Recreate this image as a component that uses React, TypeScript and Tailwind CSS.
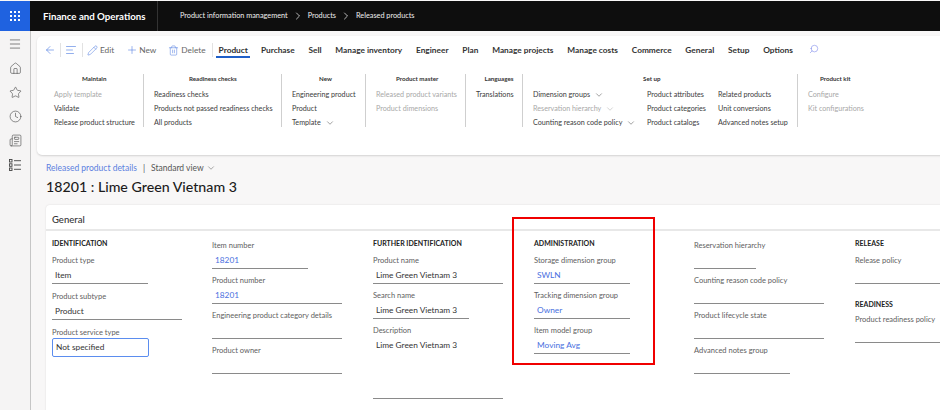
import { ChevronDown, ChevronRight, ArrowLeft, Plus, Pencil, Trash2, Search, Home, Star, Clock, Newspaper, Menu, AlignLeft } from 'lucide-react';

const tabs = ['Purchase', 'Sell', 'Manage inventory', 'Engineer', 'Plan', 'Manage projects', 'Manage costs', 'Commerce', 'General', 'Setup', 'Options'];

function AppGrid() {
  return (
    <svg width="10" height="10" viewBox="0 0 10 10" fill="currentColor">
      {[0, 4, 8].map((y) =>
        [0, 4, 8].map((x) => <rect key={`${x}-${y}`} x={x} y={y} width="2" height="2" />),
      )}
    </svg>
  );
}

function CheckList() {
  return (
    <svg width="14" height="14" viewBox="0 0 14 14" fill="none" stroke="currentColor" strokeWidth="0.9">
      <rect x="1.5" y="1.5" width="2.5" height="2.5" />
      <rect x="1.5" y="5.8" width="2.5" height="2.5" />
      <rect x="1.5" y="10" width="2.5" height="2.5" />
      <path d="M6 2.7h7M6 7h7M6 11.3h7" />
    </svg>
  );
}

function RibbonItem({ text, off, chevron }: { text: string; off?: boolean; chevron?: boolean }) {
  return (
    <div className={`h-[14px] flex items-center whitespace-nowrap ${off ? 'text-[#a8a8a8]' : 'text-[#3c3c3c]'}`}>
      {text}
      {chevron && <ChevronDown className={`ml-[4px] ${off ? 'text-[#a8a8a8]' : 'text-[#444]'}`} size={10} strokeWidth={1.2} />}
    </div>
  );
}

function RibbonGroup({ title, width, pl, border = true, titleClass = 'text-center', children }: { title: string; width: string; pl: string; border?: boolean; titleClass?: string; children: React.ReactNode }) {
  return (
    <div className={`${width} ${pl} h-[53px] shrink-0 ${border ? 'border-r border-[#cfcfcf]' : ''}`}>
      <div className={`text-[6.2px] leading-[9px] font-bold text-[#333] mb-[5px] ${titleClass}`}>{title}</div>
      {children}
    </div>
  );
}

function Field({ label, value, link, line, mb = 'mb-[4px]', boxed }: { label: string; value?: string; link?: boolean; line: string; mb?: string; boxed?: boolean }) {
  return (
    <div className={mb}>
      <div className="h-[14px] leading-[15px] text-[7.5px] text-[#5e5e5e] whitespace-nowrap">{label}</div>
      {boxed ? (
        <div className={`${line} h-[19px] mt-[-1px] border border-[#5b8def] rounded-[2px] pl-[3px] leading-[17px] text-[8.3px] text-[#333]`}>{value}</div>
      ) : (
        <div className={`${line} h-[17px] border-b border-[#8a8a8a] pl-[3px] leading-[16px] text-[8.3px] whitespace-nowrap ${link ? 'text-[#4a6fe0]' : 'text-[#333]'}`}>{value}</div>
      )}
    </div>
  );
}

function Heading({ text, mb = 'mb-[5px]' }: { text: string; mb?: string }) {
  return <div className={`h-[10px] leading-[10px] text-[7px] font-bold text-[#222] ${mb}`}>{text}</div>;
}

export default function App() {
  return (
    <div className="w-[940px] h-[410px] overflow-hidden relative bg-[#f8f7f7] font-['Lato',sans-serif] pt-px">
      <div className="flex h-[30px] bg-[#0e0e0e] text-white items-center">
        <div className="w-[30px] h-full bg-[#1f62e0] flex items-center justify-center">
          <AppGrid />
        </div>
        <div className="w-[128px] h-full pl-[13px] text-[9.7px] font-bold leading-[30px] border-r border-[#333] whitespace-nowrap">Finance and Operations</div>
        <div className="flex items-center pl-[22px] text-[7.3px] text-[#eee] whitespace-nowrap">
          Product information management
          <ChevronRight size={12} strokeWidth={1.5} className="mx-[4px]" />
          Products
          <ChevronRight size={12} strokeWidth={1.5} className="mx-[4px]" />
          Released products
        </div>
      </div>

      <div className="flex h-[379px]">
        <div className="w-[31px] shrink-0 bg-[#f5f4f4] border-r border-[#c6c6c6] flex flex-col items-center pt-[6px] gap-[11px] text-[#444]">
          <Menu size={14} strokeWidth={1.1} />
          <Home size={13} strokeWidth={1.1} />
          <Star size={13} strokeWidth={1.1} />
          <Clock size={13} strokeWidth={1.1} />
          <Newspaper size={13} strokeWidth={1.1} />
          <CheckList />
        </div>

        <div className="flex-1 min-w-0 pt-[5px]">
          <div className="ml-[6px] w-[960px] h-[119px] bg-white rounded-[5px] shadow-[0_1px_2px_rgba(0,0,0,0.15)]">
            <div className="flex items-center h-[24px] pl-[7px] pt-[4px] text-[8.3px] text-[#3a3a3a] whitespace-nowrap">
              <ArrowLeft size={12} strokeWidth={1.2} className="text-[#4a78e0]" />
              <div className="w-px h-[14px] bg-[#e2e2e2] mx-[4px]" />
              <AlignLeft size={12} strokeWidth={1.2} className="text-[#4a78e0]" />
              <div className="w-px h-[14px] bg-[#e2e2e2] ml-[5px] mr-[4px]" />
              <Pencil size={11} strokeWidth={1.1} className="text-[#4a78e0] mr-[2px]" />
              <span className="text-[#666]">Edit</span>
              <Plus size={12} strokeWidth={1.1} className="text-[#4a78e0] ml-[12px] mr-[1px]" />
              <span className="text-[#666]">New</span>
              <Trash2 size={11} strokeWidth={1.1} className="text-[#4a78e0] ml-[12px] mr-[2px]" />
              <span className="text-[#666]">Delete</span>
              <div className="w-px h-[14px] bg-[#e2e2e2] ml-[6px] mr-[5px]" />
              <div className="relative ml-px font-bold text-[#2e2e2e]">
                Product
                <div className="absolute left-[-3px] right-[-2px] top-[12px] h-[2px] bg-[#1f5fc8]" />
              </div>
              <div className="flex gap-[13.8px] ml-[13px] font-bold text-[#333]">
                {tabs.map((t) => (
                  <span key={t}>{t}</span>
                ))}
              </div>
              <Search size={10} strokeWidth={1.2} className="text-[#6b78e8] ml-[16px] -mt-[2px] -scale-x-100" />
            </div>

            <div className="flex mt-[14px] text-[7.2px]">
              <RibbonGroup title="Maintain" width="w-[107px]" pl="pl-[17px]" titleClass="text-left pl-[28px]">
                <RibbonItem text="Apply template" off />
                <RibbonItem text="Validate" />
                <RibbonItem text="Release product structure" />
              </RibbonGroup>
              <RibbonGroup title="Readiness checks" width="w-[138px]" pl="pl-[10px]" titleClass="text-left pl-[35px]">
                <RibbonItem text="Readiness checks" />
                <RibbonItem text="Products not passed readiness checks" />
                <RibbonItem text="All products" />
              </RibbonGroup>
              <RibbonGroup title="New" width="w-[84px]" pl="pl-[10px]" titleClass="text-left pl-[27px]">
                <RibbonItem text="Engineering product" />
                <RibbonItem text="Product" />
                <RibbonItem text="Template" chevron />
              </RibbonGroup>
              <RibbonGroup title="Product master" width="w-[100px]" pl="pl-[10px]" titleClass="text-left pl-[20px]">
                <RibbonItem text="Released product variants" off />
                <RibbonItem text="Product dimensions" off />
              </RibbonGroup>
              <RibbonGroup title="Languages" width="w-[57px]" pl="pl-[10px]">
                <RibbonItem text="Translations" />
              </RibbonGroup>
              <RibbonGroup title="Set up" width="w-[275px]" pl="pl-[10px]" titleClass="text-left pl-[110px]">
                <div className="flex">
                  <div className="w-[114px]">
                    <RibbonItem text="Dimension groups" chevron />
                    <RibbonItem text="Reservation hierarchy" off chevron />
                    <RibbonItem text="Counting reason code policy" chevron />
                  </div>
                  <div className="w-[71px]">
                    <RibbonItem text="Product attributes" />
                    <RibbonItem text="Product categories" />
                    <RibbonItem text="Product catalogs" />
                  </div>
                  <div>
                    <RibbonItem text="Related products" />
                    <RibbonItem text="Unit conversions" />
                    <RibbonItem text="Advanced notes setup" />
                  </div>
                </div>
              </RibbonGroup>
              <RibbonGroup title="Product kit" width="w-[80px]" pl="pl-[10px]" border={false} titleClass="text-left pl-[12px]">
                <RibbonItem text="Configure" off />
                <RibbonItem text="Kit configurations" off />
              </RibbonGroup>
            </div>
          </div>

          <div className="ml-[15px] mt-[7px] h-[12px] flex items-center text-[8.5px] whitespace-nowrap">
            <span className="text-[#5b7fe0]">Released product details</span>
            <span className="text-[#555] mx-[6px]">|</span>
            <span className="text-[#555]">Standard view</span>
            <ChevronDown size={10} strokeWidth={1.2} className="text-[#555] ml-[2px]" />
          </div>
          <div className="ml-[15px] mt-[2px] h-[22px] leading-[22px] text-[14.2px] font-medium text-[#1c1c1c] whitespace-nowrap">18201 : Lime Green Vietnam 3</div>

          <div className="ml-[15px] mt-[7px] w-[950px] h-[220px] bg-white rounded-[4px] shadow-[0_0_2px_rgba(0,0,0,0.12)]">
            <div className="h-[26px] pl-[6px] leading-[30px] text-[9.5px] font-medium text-[#333] border-b-2 border-[#e8e8e8]">General</div>
            <div className="grid grid-cols-[160px_161px_161px_160px_161px_100px] pl-[6px] pt-[7px]">
              <div>
                <Heading text="IDENTIFICATION" />
                <Field label="Product type" value="Item" line="w-[96px]" mb="mb-[5px]" />
                <Field label="Product subtype" value="Product" line="w-[130px]" mb="mb-[5px]" />
                <Field label="Product service type" value="Not specified" line="w-[97px]" boxed />
              </div>
              <div>
                <Field label="Item number" value="18201" link line="w-[96px]" />
                <Field label="Product number" value="18201" link line="w-[130px]" />
                <Field label="Engineering product category details" line="w-[130px]" />
                <Field label="Product owner" line="w-[130px]" />
              </div>
              <div>
                <Heading text="FURTHER IDENTIFICATION" />
                <Field label="Product name" value="Lime Green Vietnam 3" line="w-[130px]" />
                <Field label="Search name" value="Lime Green Vietnam 3" line="w-[96px]" />
                <Field label="Description" value="Lime Green Vietnam 3" line="w-[130px] !h-[62px]" />
              </div>
              <div>
                <Heading text="ADMINISTRATION" />
                <Field label="Storage dimension group" value="SWLN" link line="w-[96px]" />
                <Field label="Tracking dimension group" value="Owner" link line="w-[96px]" />
                <Field label="Item model group" value="Moving Avg" link line="w-[96px]" />
              </div>
              <div>
                <Field label="Reservation hierarchy" line="w-[62px]" />
                <Field label="Counting reason code policy" line="w-[130px]" />
                <Field label="Product lifecycle state" line="w-[130px]" />
                <Field label="Advanced notes group" line="w-[96px]" />
              </div>
              <div>
                <Heading text="RELEASE" />
                <Field label="Release policy" line="w-[130px]" mb="mb-[15px]" />
                <Heading text="READINESS" mb="mb-[3px]" />
                <Field label="Product readiness policy" line="w-[130px]" />
              </div>
            </div>
          </div>
        </div>
      </div>

      <div className="absolute left-[512px] top-[217px] w-[143px] h-[148px] border-2 border-[#f00000]" />
    </div>
  );
}
